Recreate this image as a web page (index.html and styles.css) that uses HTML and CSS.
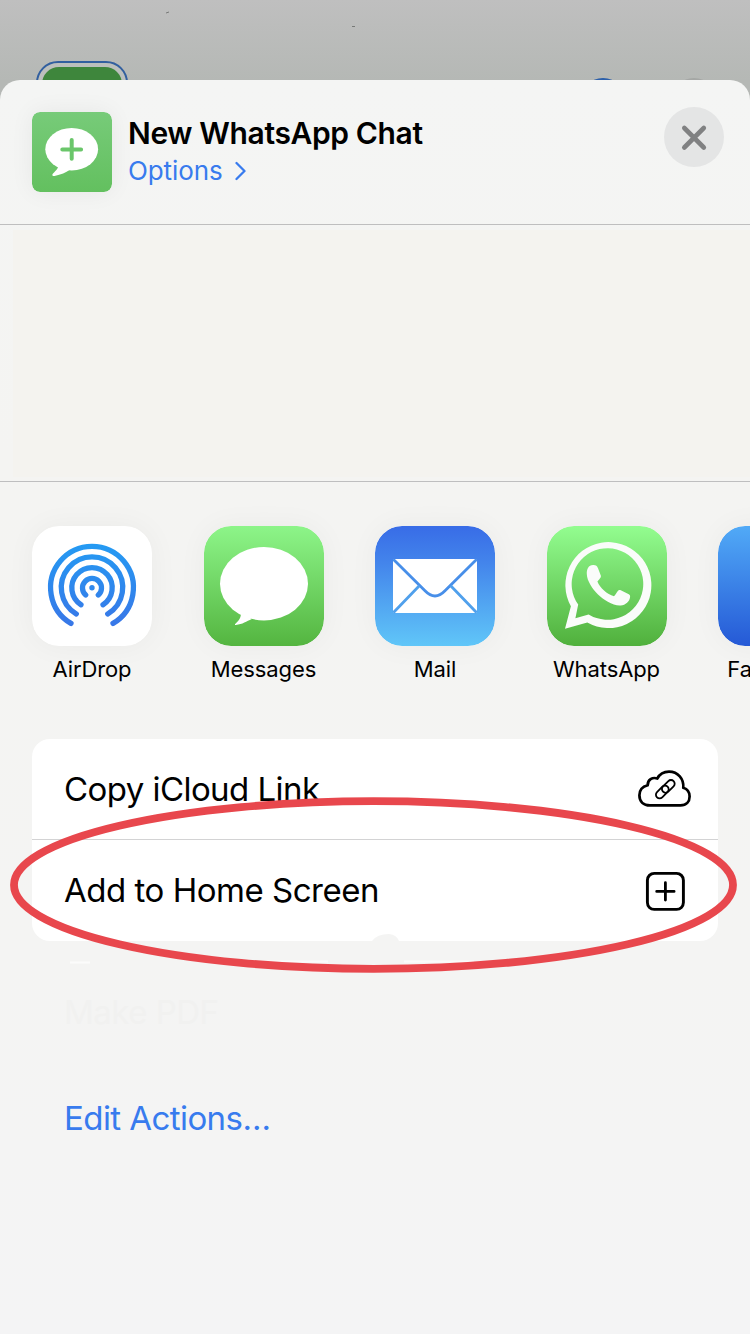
FILE: index.html
```html
<!DOCTYPE html>
<html lang="en">
<head>
<meta charset="utf-8">
<title>Share</title>
<link rel="stylesheet" href="styles.css">
</head>
<body>
<div class="screen">
  <div class="backdrop">
    <svg class="backdrop-art" width="750" height="100" viewBox="0 0 750 100">
      <rect x="37" y="62" width="90" height="90" rx="21" fill="#bcbfbc" stroke="#325f9f" stroke-width="2"/>
      <rect x="42" y="67" width="80" height="80" rx="17" fill="#3e863c"/>
      <circle cx="603" cy="101" r="23" fill="#2c5faa"/>
      <circle cx="694" cy="101" r="23" fill="#a5a7a5"/>
      <path d="M166 13l3-1M352 26.500h3" stroke="#777977" stroke-width="1"/>
    </svg>
  </div>
  <main class="sheet">
    <header class="head">
      <svg class="shortcut" width="80" height="80" viewBox="0 0 80 80">
        <defs><linearGradient id="g-short" x2="0" y2="1"><stop stop-color="#77cb79"/><stop offset="1" stop-color="#63c05f"/></linearGradient></defs>
        <rect width="80" height="80" rx="8" fill="url(#g-short)"/>
        <ellipse cx="39.700" cy="37.200" rx="26.400" ry="21.200" fill="#fff"/>
        <path d="M26.500 52c.3 4-2.500 6.500-5.500 9.500-1.500 1.700-.3 2.900 1.500 2.500C29 62.500 34 60.500 37.500 58L40 50z" fill="#fff"/>
        <path d="M39.700 28v18.800M30.300 37.400h18.800" stroke="#6ac66a" stroke-width="4" stroke-linecap="round"/>
      </svg>
      <div class="titles">
        <h1 class="title">New WhatsApp Chat</h1>
        <div class="options"><span class="options-text">Options</span>
          <svg width="12" height="20" viewBox="0 0 12 20"><path d="M1.500 2l8 8-8 8" fill="none" stroke="#387bee" stroke-width="2.300" stroke-linecap="round" stroke-linejoin="round"/></svg>
        </div>
      </div>
      <div class="close">
        <svg width="60" height="60" viewBox="0 0 60 60"><path d="M20.300 21l19.500 19.500M39.800 21L20.300 40.500" stroke="#808182" stroke-width="4.600" stroke-linecap="round"/></svg>
      </div>
    </header>
    <section class="people"><div class="people-panel"></div></section>
    <section class="apps">
      <div class="app">
        <svg class="app-icon" width="120" height="120" viewBox="0 0 120 120">
          <defs><linearGradient id="g-air" gradientUnits="userSpaceOnUse" x1="0" y1="17" x2="0" y2="102"><stop stop-color="#249bf3"/><stop offset="1" stop-color="#3976e7"/></linearGradient></defs>
          <rect width="120" height="120" rx="27" fill="#fff"/>
          <g fill="none" stroke="url(#g-air)" stroke-width="5.300" stroke-linecap="round">
            <path d="M39 97.400A41.400 41.400 0 1 1 81 97.400"/>
            <path d="M44.300 88A30.700 30.700 0 1 1 75.700 88"/>
            <path d="M49 78.700A20.200 20.200 0 1 1 71 78.700"/>
            <path d="M53.700 69A9.500 9.500 0 1 1 66.300 69"/>
          </g>
          <circle cx="60" cy="61.700" r="2.700" fill="#2f88ed"/>
        </svg>
        <span class="app-name">AirDrop</span>
      </div>
      <div class="app">
        <svg class="app-icon" width="120" height="120" viewBox="0 0 120 120">
          <defs><linearGradient id="g-msg" x2="0" y2="1"><stop stop-color="#8df589"/><stop offset="1" stop-color="#54b540"/></linearGradient></defs>
          <rect width="120" height="120" rx="27" fill="url(#g-msg)"/>
          <ellipse cx="60" cy="57.700" rx="44" ry="36.700" fill="#fff"/>
          <path d="M36.500 86c1.500 5-2 9-5.300 12-.5.500-.1 1 .6.900 7-.8 10.500-3.600 16-6z" fill="#fff"/>
        </svg>
        <span class="app-name">Messages</span>
      </div>
      <div class="app">
        <svg class="app-icon" width="120" height="120" viewBox="0 0 120 120">
          <defs><linearGradient id="g-mail" x2="0" y2="1"><stop stop-color="#386ce7"/><stop offset=".3" stop-color="#4384eb"/><stop offset="1" stop-color="#60c6f8"/></linearGradient></defs>
          <rect width="120" height="120" rx="27" fill="url(#g-mail)"/>
          <rect x="18" y="33" width="84" height="54" rx="2.500" fill="#fff"/>
          <path d="M18.500 33.500L50 64.800Q60 75.200 70 64.800L101.500 33.500" fill="none" stroke="#488fe9" stroke-width="2.800"/>
          <path d="M44.300 59.800L18.500 86.500M75.700 59.800L101.500 86.500" stroke="#50a0ec" stroke-width="2.800"/>
        </svg>
        <span class="app-name">Mail</span>
      </div>
      <div class="app">
        <svg class="app-icon" width="120" height="120" viewBox="0 0 120 120">
          <defs><linearGradient id="g-wa" x2="0" y2="1"><stop stop-color="#93fd90"/><stop offset="1" stop-color="#50b03c"/></linearGradient></defs>
          <rect width="120" height="120" rx="27" fill="url(#g-wa)"/>
          <path fill="#fafcfa" fill-rule="evenodd" d="M18 102.700L23.900 80.200A43 43 0 1 1 40.300 96.600zM28.400 92.300L41.600 88.400A35.800 35.800 0 1 0 31.200 78.600z"/>
          <path fill="#fafcfa" d="M39.800 48C39.700 43 41.500 39.200 46 39c3-.1 4 .8 5 3.300l2.700 7c.6 1.600 0 2.700-3.300 6.200C53 62 60 68.300 67 70.300c1.500-1.600 2.800-3.800 4-5.500.7-1 1.700-1 2.800-.5l8 3.900c1 .5 1.400 1.200 1.300 2.500-.4 5-4.500 8.300-9.500 8.800C66 80 56 73.500 51 68.500 45.500 63 40 55 39.800 48z"/>
        </svg>
        <span class="app-name">WhatsApp</span>
      </div>
      <div class="app">
        <svg class="app-icon" width="120" height="120" viewBox="0 0 120 120">
          <defs><linearGradient id="g-fb" x2="0" y2="1"><stop stop-color="#51aaf7"/><stop offset="1" stop-color="#2559d6"/></linearGradient></defs>
          <rect width="120" height="120" rx="27" fill="url(#g-fb)"/>
        </svg>
        <span class="app-name">Facebook</span>
      </div>
    </section>
    <section class="actions">
      <div class="row">
        <span class="row-text copy">Copy iCloud Link</span>
        <svg class="cloud" width="54" height="38" viewBox="0 0 54 38" fill="none" stroke="#000">
          <path stroke-width="2.700" stroke-linejoin="round" d="M12 35.400H42.500C48.500 35.400 51.600 31.500 51.600 26.500 51.600 22 49 19 45.300 17.800 46 9 40 1.600 31 1.600 25.500 1.600 21.500 4.300 19.300 8.500 14.500 6.800 9.500 9.800 9.700 15.200 4.500 16.500 1.400 20.500 1.400 25.300 1.400 31.500 5.500 35.400 12 35.400z"/>
          <g stroke-width="1.800"><rect x="-7.500" y="-3.700" width="15" height="7.400" rx="3.700" transform="translate(24.300 22) rotate(-45)"/><rect x="-7.500" y="-3.700" width="15" height="7.400" rx="3.700" transform="translate(30.300 16.400) rotate(-45)"/></g>
        </svg>
      </div>
      <div class="row row-last">
        <span class="row-text add">Add to Home Screen</span>
        <svg class="plus" width="40" height="40" viewBox="0 0 40 40" fill="none" stroke="#000"><rect x="2.400" y="2.400" width="36" height="36" rx="6.800" stroke-width="2.900"/><path d="M20.400 11.700v17.400M11.700 20.400h17.400" stroke-width="2.800" stroke-linecap="round"/></svg>
      </div>
    </section>
    <div class="disabled-row">Make PDF</div>
    <div class="edit">Edit Actions…</div>
  </main>
  <svg class="marker" width="750" height="190" viewBox="0 0 750 190">
    <path d="M372 151q5-7 17-7 8 1 10 7z" fill="#f4f4f3"/>
    <path d="M230 171.500h98M404 171.500h70M70 172.500h20" stroke="#fbfbfb" stroke-width="2"/>
    <ellipse cx="373.500" cy="95" rx="359.500" ry="83.800" fill="none" stroke="#e8474d" stroke-width="7.800"/>
  </svg>
</div>
</body>
</html>
```
FILE: styles.css
```css
* { box-sizing: border-box; }
body { margin: 0; font-family: Inter, "Liberation Sans", sans-serif; color: #000; }
.screen { position: relative; width: 750px; height: 1334px; overflow: hidden; background: #b5b8b5; }
.backdrop { height: 80px; background: linear-gradient(#bfbfbf, #b5b8b5); }
.backdrop-art { display: block; }
.sheet { position: relative; height: 1254px; border-radius: 20px 20px 0 0; overflow: hidden; background: linear-gradient(#f4f5f4, #f4f4f2 30%, #f4f4f3 70%, #f4f4f5); }
.head { display: flex; height: 145px; padding: 32px 26px 0 32px; border-bottom: 1px solid #bebebf; }
.shortcut { flex: none; border-radius: 8px; box-shadow: 0 0 24px rgba(0, 0, 0, .06); }
.titles { flex: 1; padding-left: 16px; }
.title { margin: 2px 0 0; font-size: 30px; line-height: 38px; font-weight: 600; letter-spacing: -.37px; white-space: nowrap; }
.options { display: flex; align-items: center; gap: 12px; height: 38px; color: #387bee; font-size: 26px; line-height: 38px; letter-spacing: -.1px; }
.close { width: 60px; height: 60px; margin-top: -5px; border-radius: 50%; background: #e4e5e5; }
.close svg { display: block; }
.people { height: 257px; padding: 5px 0 4px 13px; border-bottom: 1px solid #bebebf; }
.people-panel { height: 100%; background: #f4f3ef; }
.apps { display: flex; gap: 51.500px; padding: 44px 0 0 32px; height: 257px; }
.app { display: flex; flex: none; flex-direction: column; align-items: center; width: 120px; }
.app-icon { display: block; border-radius: 27px; box-shadow: 0 0 30px rgba(0, 0, 0, .045); }
.app-name { margin-top: 8px; font-size: 22px; line-height: 30px; letter-spacing: -.1px; white-space: nowrap; }
.actions { width: 686px; height: 202px; margin: 0 32px; border-radius: 18px; background: #fff; }
.row { display: flex; align-items: center; justify-content: space-between; height: 101px; padding: 0 26px 0 32px; border-bottom: 1px solid #d3d3d4; }
.row-last { border-bottom: 0; padding-right: 33px; }
.row-text { font-size: 33px; line-height: 44px; letter-spacing: -.56px; white-space: nowrap; }
.add { padding-bottom: 2px; letter-spacing: -.48px; }
.disabled-row { height: 44px; margin: 49px 0 0 64px; font-size: 33px; line-height: 44px; letter-spacing: -.5px; color: #f1f1f0; }
.edit { margin: 62px 0 0 64px; font-size: 33px; line-height: 44px; letter-spacing: -.57px; color: #387bee; white-space: nowrap; }
.marker { position: absolute; left: 0; top: 790px; }
```
